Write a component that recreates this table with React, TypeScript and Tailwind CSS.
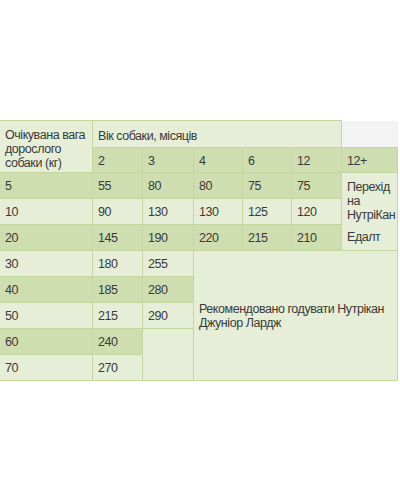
import React from "react";

const dark = "bg-[#cfdeb1]";
const light = "bg-[#e6eed7]";
const cell = "border border-[#c3d79f] px-[5px] align-middle";

const rows = [
  { w: "5", v: ["55", "80", "80", "75", "75"] },
  { w: "10", v: ["90", "130", "130", "125", "120"] },
  { w: "20", v: ["145", "190", "220", "215", "210"] },
  { w: "30", v: ["180", "255"] },
  { w: "40", v: ["185", "280"] },
  { w: "50", v: ["215", "290"] },
  { w: "60", v: ["240"] },
  { w: "70", v: ["270"] },
];

export default function App() {
  return (
    <div className="w-[400px] h-[500px] bg-white overflow-hidden pt-[120px]">
      <table
        className="w-[399px] border-collapse table-fixed text-[12.5px] leading-[14px] tracking-[-0.45px] text-[#3a3a3a] ml-[-1px]"
        style={{ fontFamily: '"Liberation Sans", Arial, sans-serif' }}
      >
        <colgroup>
          <col className="w-[93px]" />
          <col className="w-[50px]" />
          <col className="w-[51px]" />
          <col className="w-[49px]" />
          <col className="w-[49px]" />
          <col className="w-[50px]" />
          <col />
        </colgroup>
        <thead>
          <tr className="h-[27px]">
            <td rowSpan={2} className={`${cell} ${light} pt-[5px] pr-0 whitespace-nowrap`}>
              Очікувана вага
              <br />
              дорослого
              <br />
              собаки (кг)
            </td>
            <td colSpan={5} className={`${cell} ${light} pt-[3px]`}>
              Вік собаки, місяців
            </td>
            <td className="border-l border-b border-[#c3d79f] bg-[#f3f3f3]"></td>
          </tr>
          <tr className="h-[25px]">
            {["2", "3", "4", "6", "12", "12+"].map((h) => (
              <td key={h} className={`${cell} ${dark} pt-[2px]`}>
                {h}
              </td>
            ))}
          </tr>
        </thead>
        <tbody>
          {rows.map((r, i) => {
            const bg = i % 2 === 0 ? dark : light;
            return (
              <tr key={r.w} className="h-[26px]">
                <td className={`${cell} ${bg}`}>{r.w}</td>
                {r.v.map((v, j) => (
                  <td key={j} className={`${cell} ${bg}`}>
                    {v}
                  </td>
                ))}
                {i === 0 && (
                  <td rowSpan={3} className={`${cell} ${light} pr-0`}>
                    Перехід
                    <br />
                    на
                    <br />
                    НутріКан
                    <div className="mt-[8px]">Едалт</div>
                  </td>
                )}
                {i === 3 && (
                  <td rowSpan={5} colSpan={4} className={`${cell} ${light} whitespace-nowrap`}>
                    Рекомендовано годувати Нутрікан
                    <br />
                    Джуніор Лардж
                  </td>
                )}
                {i === 6 && <td rowSpan={2} className={`${cell} ${light}`}></td>}
              </tr>
            );
          })}
        </tbody>
      </table>
    </div>
  );
}
